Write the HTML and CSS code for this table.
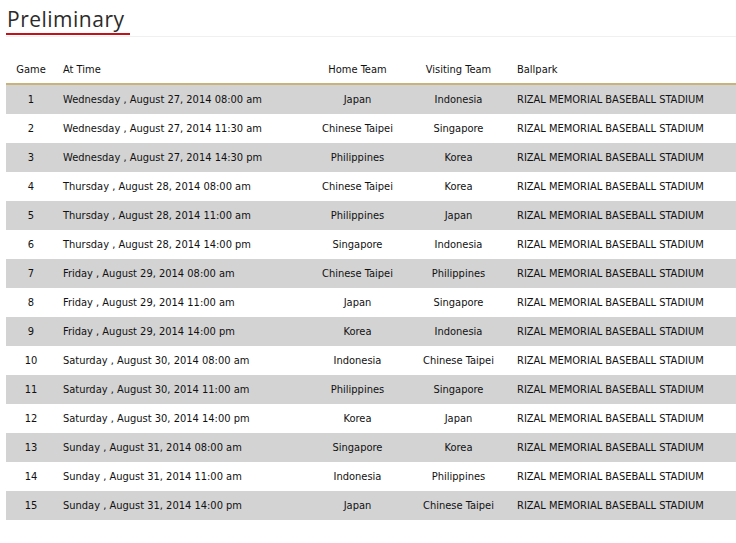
FILE: index.html
```html
<!DOCTYPE html>
<html>
<head>
<meta charset="utf-8">
<link rel="stylesheet" href="styles.css">
</head>
<body>
<div class="page">
  <div class="title-bar">
    <h2 class="title">Preliminary</h2>
  </div>
  <table class="schedule">
    <thead>
      <tr>
        <th class="c-game">Game</th>
        <th class="c-time">At Time</th>
        <th class="c-home">Home Team</th>
        <th class="c-visit">Visiting Team</th>
        <th class="c-park">Ballpark</th>
      </tr>
    </thead>
    <tbody>
      <tr><td class="c-game">1</td><td class="c-time">Wednesday , August 27, 2014 08:00 am</td><td class="c-home">Japan</td><td class="c-visit">Indonesia</td><td class="c-park">RIZAL MEMORIAL BASEBALL STADIUM</td></tr>
      <tr><td class="c-game">2</td><td class="c-time">Wednesday , August 27, 2014 11:30 am</td><td class="c-home">Chinese Taipei</td><td class="c-visit">Singapore</td><td class="c-park">RIZAL MEMORIAL BASEBALL STADIUM</td></tr>
      <tr><td class="c-game">3</td><td class="c-time">Wednesday , August 27, 2014 14:30 pm</td><td class="c-home">Philippines</td><td class="c-visit">Korea</td><td class="c-park">RIZAL MEMORIAL BASEBALL STADIUM</td></tr>
      <tr><td class="c-game">4</td><td class="c-time">Thursday , August 28, 2014 08:00 am</td><td class="c-home">Chinese Taipei</td><td class="c-visit">Korea</td><td class="c-park">RIZAL MEMORIAL BASEBALL STADIUM</td></tr>
      <tr><td class="c-game">5</td><td class="c-time">Thursday , August 28, 2014 11:00 am</td><td class="c-home">Philippines</td><td class="c-visit">Japan</td><td class="c-park">RIZAL MEMORIAL BASEBALL STADIUM</td></tr>
      <tr><td class="c-game">6</td><td class="c-time">Thursday , August 28, 2014 14:00 pm</td><td class="c-home">Singapore</td><td class="c-visit">Indonesia</td><td class="c-park">RIZAL MEMORIAL BASEBALL STADIUM</td></tr>
      <tr><td class="c-game">7</td><td class="c-time">Friday , August 29, 2014 08:00 am</td><td class="c-home">Chinese Taipei</td><td class="c-visit">Philippines</td><td class="c-park">RIZAL MEMORIAL BASEBALL STADIUM</td></tr>
      <tr><td class="c-game">8</td><td class="c-time">Friday , August 29, 2014 11:00 am</td><td class="c-home">Japan</td><td class="c-visit">Singapore</td><td class="c-park">RIZAL MEMORIAL BASEBALL STADIUM</td></tr>
      <tr><td class="c-game">9</td><td class="c-time">Friday , August 29, 2014 14:00 pm</td><td class="c-home">Korea</td><td class="c-visit">Indonesia</td><td class="c-park">RIZAL MEMORIAL BASEBALL STADIUM</td></tr>
      <tr><td class="c-game">10</td><td class="c-time">Saturday , August 30, 2014 08:00 am</td><td class="c-home">Indonesia</td><td class="c-visit">Chinese Taipei</td><td class="c-park">RIZAL MEMORIAL BASEBALL STADIUM</td></tr>
      <tr><td class="c-game">11</td><td class="c-time">Saturday , August 30, 2014 11:00 am</td><td class="c-home">Philippines</td><td class="c-visit">Singapore</td><td class="c-park">RIZAL MEMORIAL BASEBALL STADIUM</td></tr>
      <tr><td class="c-game">12</td><td class="c-time">Saturday , August 30, 2014 14:00 pm</td><td class="c-home">Korea</td><td class="c-visit">Japan</td><td class="c-park">RIZAL MEMORIAL BASEBALL STADIUM</td></tr>
      <tr><td class="c-game">13</td><td class="c-time">Sunday , August 31, 2014 08:00 am</td><td class="c-home">Singapore</td><td class="c-visit">Korea</td><td class="c-park">RIZAL MEMORIAL BASEBALL STADIUM</td></tr>
      <tr><td class="c-game">14</td><td class="c-time">Sunday , August 31, 2014 11:00 am</td><td class="c-home">Indonesia</td><td class="c-visit">Philippines</td><td class="c-park">RIZAL MEMORIAL BASEBALL STADIUM</td></tr>
      <tr><td class="c-game">15</td><td class="c-time">Sunday , August 31, 2014 14:00 pm</td><td class="c-home">Japan</td><td class="c-visit">Chinese Taipei</td><td class="c-park">RIZAL MEMORIAL BASEBALL STADIUM</td></tr>
    </tbody>
  </table>
</div>
</body>
</html>
```

FILE: styles.css
```css
html, body {
  margin: 0;
  padding: 0;
  background: #fff;
}
.page {
  padding: 0 0 0 6px;
}
.title-bar {
  border-bottom: 1px solid #f0f0f0;
  height: 36px;
}
.title {
  display: inline-block;
  margin: 0;
  padding: 6px 0 0 1px;
  width: 123px;
  height: 27px;
  border-bottom: 2px solid #c4121c;
  font-family: "Open Sans", sans-serif;
  font-weight: 400;
  font-size: 21px;
  line-height: 27px;
  letter-spacing: 0.5px;
  color: #2b2b2b;
}
.schedule {
  margin-top: 19px;
  width: 730px;
  border-collapse: collapse;
  font-family: "DejaVu Sans Condensed", "Liberation Sans", sans-serif;
  font-size: 11px;
  color: #111;
}
.schedule th {
  font-weight: 400;
  height: 27px;
  padding: 0;
  border-bottom: 2px solid #c9b37a;
}
.schedule td {
  height: 29px;
  padding: 0;
}
.schedule tbody tr:nth-child(odd) {
  background: #d3d3d3;
}
.c-game { width: 50px; text-align: center; }
.c-time { width: 237px; text-align: left; padding-left: 7px !important; }
.c-home { width: 115px; text-align: center; }
.c-visit { width: 87px; text-align: center; }
.c-park { text-align: left; padding-left: 15px !important; }
```
